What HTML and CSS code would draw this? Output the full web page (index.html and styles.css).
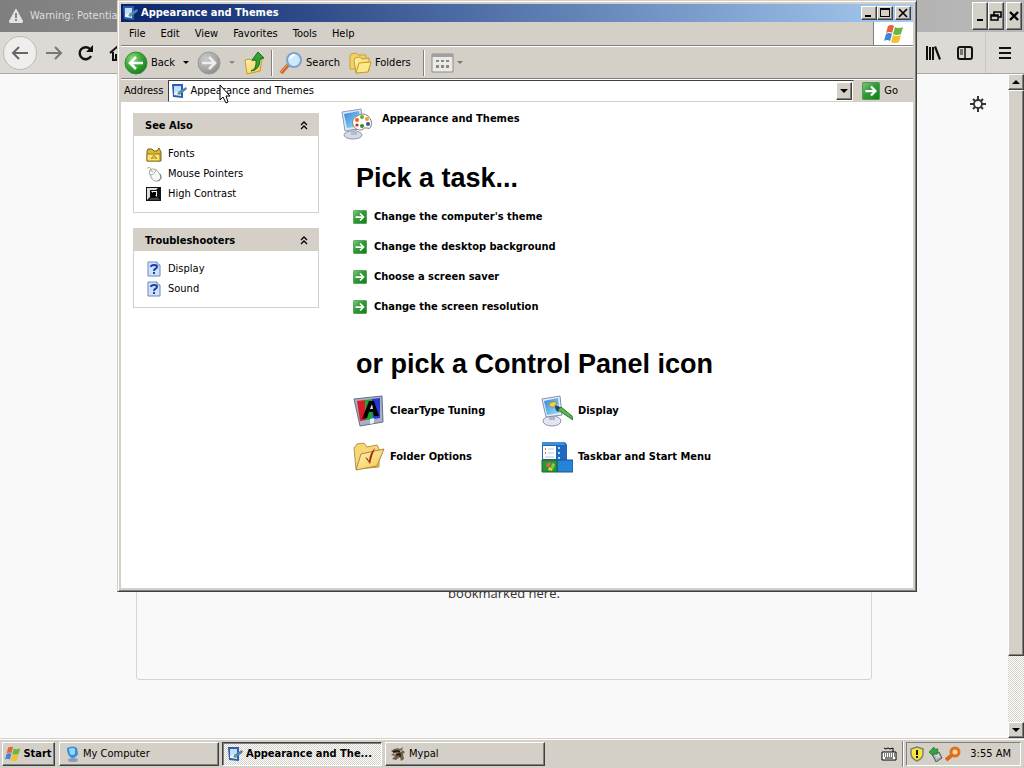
FILE: index.html
```html
<!DOCTYPE html>
<html lang="en">
<head>
    <meta charset="UTF-8">
    <meta name="viewport" content="width=device-width, initial-scale=1.0">
    <title>Appearance and Themes</title>
    <link rel="stylesheet" href="styles.css">
</head>
<body>
    <!-- shared icons -->
    <svg class="defs" aria-hidden="true">
        <defs>
            <linearGradient id="green" x1="0" y1="0" x2="1" y2="1">
                <stop offset="0" stop-color="#8cc98a"/><stop offset=".4" stop-color="#35a03a"/><stop offset="1" stop-color="#0f7a1a"/>
            </linearGradient>
            <radialGradient id="ball" cx=".35" cy=".3" r=".8">
                <stop offset="0" stop-color="#8fdc7c"/><stop offset=".5" stop-color="#3aa935"/><stop offset="1" stop-color="#15731b"/>
            </radialGradient>
            <radialGradient id="grayball" cx=".35" cy=".3" r=".8">
                <stop offset="0" stop-color="#c9c9c9"/><stop offset=".6" stop-color="#a9a8a6"/><stop offset="1" stop-color="#858585"/>
            </radialGradient>
            <linearGradient id="screen" x1="0" y1="0" x2="1" y2="1">
                <stop offset="0" stop-color="#2f86dd"/><stop offset="1" stop-color="#a5e0fb"/>
            </linearGradient>
            <linearGradient id="yellow" x1="0" y1="0" x2="1" y2="1">
                <stop offset="0" stop-color="#fff6b8"/><stop offset="1" stop-color="#f0c648"/>
            </linearGradient>
        </defs>
        <symbol id="i-theme" viewBox="0 0 16 16">
            <path d="M1 1h11v14l-10-1z" fill="#2d5eb0"/>
            <path d="M3 3h7v10l-7-1z" fill="#eaf4fe"/>
            <path d="M3 3h7v4l-7 3z" fill="#c5ddf8"/>
            <path d="M7 9l3-2 5-3 1 2-5 4z" fill="#4f83b5"/>
            <path d="M6 11l2-3 3 1-2 3z" fill="#5d9c8c"/>
        </symbol>
        <symbol id="i-arrow" viewBox="0 0 16 16">
            <rect x=".5" y=".5" width="15" height="15" rx="1" fill="url(#green)" stroke="#4c9c50"/>
            <path d="M3 8h9M8 4l4 4-4 4" fill="none" stroke="#fff" stroke-width="2"/>
        </symbol>
        <symbol id="i-flag" viewBox="0 0 20 18">
            <path d="M4 1q4-2 6 0L8 8Q6 6 2 8z" fill="#e5623a"/>
            <path d="M11 2q3 2 8 0l-2 7q-4 2-8 0z" fill="#6cb53f"/>
            <path d="M2 9q3-2 6 0l-2 7q-3-2-6 0z" fill="#3f84d8"/>
            <path d="M9 10q4 2 8 0l-2 7q-4 2-8 0z" fill="#f5bf2c"/>
        </symbol>
        <symbol id="i-up2" viewBox="0 0 9 9">
            <path d="M1 4l3-3 3 3M1 8l3-3 3 3" fill="none" stroke="#000" stroke-width="1.3"/>
        </symbol>
        <symbol id="i-help" viewBox="0 0 16 16">
            <path d="M2 1h9l3 3v11H2z" fill="#cfe2fb" stroke="#6b87b8"/>
            <path d="M11 1v3h3" fill="#fff" stroke="#6b87b8"/>
            <path d="M5 6q0-2 3-2t3 2q0 1-2 2-1 1-1 2" fill="none" stroke="#1f3fa8" stroke-width="2"/>
            <rect x="7" y="11" width="2" height="2" fill="#1f3fa8"/>
        </symbol>
    </svg>

    <div class="browser">
        <div class="browser-title">
            <svg class="warn" width="16" height="16" viewBox="0 0 16 16"><path d="M8 1q1 0 1 1l6 11q0 2-1 2H2q-1 0-1-2L7 2q0-1 1-1z" fill="#e4e4e4"/><path d="M7 5h2v5H7zM7 11h2v2H7z" fill="#858585"/></svg>
            <span>Warning: Potentia</span>
            <div class="browser-controls">
                <button type="button" aria-label="Minimize"><svg width="12" height="12" viewBox="0 0 12 12"><path d="M3 9h6v2H3z"/></svg></button>
                <button type="button" aria-label="Restore"><svg width="12" height="12" viewBox="0 0 12 12"><path d="M4 5V2h7v5H8M4 2h7" fill="none" stroke="#000" stroke-width="1.6"/><path d="M1 5h7v5H1zM1 6h7" fill="none" stroke="#000" stroke-width="1.5"/></svg></button>
                <button type="button" aria-label="Close" class="gap"><svg width="12" height="12" viewBox="0 0 12 12"><path d="M2 2l8 8M10 2l-8 8" stroke="#000" stroke-width="2.4"/></svg></button>
            </div>
        </div>
        <div class="browser-nav">
            <button type="button" class="round" aria-label="Back"><svg width="20" height="20" viewBox="0 0 20 20"><path d="M18 10H3M9 4l-6 6 6 6" fill="none" stroke="#666" stroke-width="2"/></svg></button>
            <button type="button" aria-label="Forward"><svg width="18" height="18" viewBox="0 0 18 18"><path d="M1 9h15M10 3l6 6-6 6" fill="none" stroke="#777" stroke-width="2"/></svg></button>
            <button type="button" aria-label="Reload"><svg width="18" height="18" viewBox="0 0 18 18"><path d="M14 12a6 6 0 1 1-1-7" fill="none" stroke="#111" stroke-width="2.4"/><path d="M16 1v7H9z" fill="#111"/></svg></button>
            <button type="button" aria-label="Home"><svg width="18" height="18" viewBox="0 0 18 18"><path d="M1 9l8-7 8 7M4 8v8h3v-5h4v5h3V8" fill="none" stroke="#111" stroke-width="2"/></svg></button>
            <div class="nav-right">
                <button type="button" aria-label="Library"><svg width="16" height="16" viewBox="0 0 16 16"><path d="M1 1h2v14H1zM4 2h2v13H4zM7 2h2v13H7zM9 2l2-1 5 13-2 1z" fill="#111"/></svg></button>
                <button type="button" aria-label="Sidebars"><svg width="16" height="16" viewBox="0 0 16 16"><rect x="1" y="2" width="14" height="12" rx="2" fill="none" stroke="#111" stroke-width="2"/><path d="M8 2v12" stroke="#111" stroke-width="1.5"/><path d="M3 5h3M3 7h3M3 9h3" stroke="#111"/></svg></button>
                <button type="button" aria-label="Open menu" class="menu-button"><svg width="14" height="14" viewBox="0 0 14 14"><path d="M1 1h12v2H1zM1 6h12v2H1zM1 11h12v2H1z" fill="#111"/></svg></button>
            </div>
        </div>
        <div class="browser-body">
            <div class="page">
                <svg class="gear" width="16" height="16" viewBox="0 0 16 16"><circle cx="8" cy="8" r="4" fill="none" stroke="#333" stroke-width="1.8"/><path d="M8 0v4M8 12v4M0 8h4M12 8h4M3 3l2 2M11 11l2 2M13 3l-2 2M5 11l-2 2" stroke="#333" stroke-width="2"/></svg>
                <section class="highlights"><p>bookmarked here.</p></section>
            </div>
            <div class="scrollbar">
                <button type="button" aria-label="Scroll up"><svg width="8" height="4" viewBox="0 0 8 4"><path d="M0 4l4-4 4 4z"/></svg></button>
                <div class="thumb"></div>
                <div class="track"></div>
                <button type="button" aria-label="Scroll down"><svg width="8" height="4" viewBox="0 0 8 4"><path d="M0 0h8L4 4z"/></svg></button>
            </div>
        </div>
    </div>

    <div class="window">
        <div class="title-bar">
            <svg width="16" height="16"><use href="#i-theme"/></svg>
            <span>Appearance and Themes</span>
            <div class="controls">
                <button type="button" aria-label="Minimize"><svg width="10" height="10" viewBox="0 0 10 10"><path d="M1 7h6v2H1z"/></svg></button>
                <button type="button" aria-label="Maximize"><svg width="10" height="10" viewBox="0 0 10 10"><path d="M0 0h10v9H0zM1 2v6h8V2z" fill-rule="evenodd"/></svg></button>
                <button type="button" aria-label="Close" class="gap"><svg width="10" height="10" viewBox="0 0 10 10"><path d="M1 1l8 8M9 1L1 9" stroke="#000" stroke-width="1.7"/></svg></button>
            </div>
        </div>

        <div class="menu-bar">
            <nav>
                <a href="#">File</a>
                <a href="#">Edit</a>
                <a href="#">View</a>
                <a href="#">Favorites</a>
                <a href="#">Tools</a>
                <a href="#">Help</a>
            </nav>
            <div class="brand"><svg width="20" height="18"><use href="#i-flag"/></svg></div>
        </div>

        <div class="tool-bar">
            <button type="button" class="tool"><svg width="24" height="24" viewBox="0 0 24 24"><circle cx="12" cy="12" r="11" fill="url(#ball)" stroke="#3c8b3c"/><path d="M19 12H7M12 6l-6 6 6 6" fill="none" stroke="#fff" stroke-width="2.6"/></svg>Back<svg class="drop" width="6" height="3" viewBox="0 0 6 3"><path d="M0 0h6L3 3z"/></svg></button>
            <button type="button" class="tool forward" aria-label="Forward"><svg width="24" height="24" viewBox="0 0 24 24"><circle cx="12" cy="12" r="11" fill="url(#grayball)" stroke="#999"/><path d="M5 12h12M12 6l6 6-6 6" fill="none" stroke="#eee" stroke-width="2.6"/></svg><svg class="drop" width="6" height="3" viewBox="0 0 6 3"><path d="M0 0h6L3 3z" fill="#888"/></svg></button>
            <button type="button" class="tool up" aria-label="Up"><svg width="22" height="24" viewBox="0 0 22 24"><path d="M2 9l5-1 2 2 10-2-2 12-13 3z" fill="url(#yellow)" stroke="#c99b25"/><path d="M8 20q6-2 5-11H9l6-8 6 6-4 1q0 11-9 12z" fill="#30a235" stroke="#167020"/></svg></button>
            <span class="separator"></span>
            <button type="button" class="tool"><svg width="24" height="24" viewBox="0 0 24 24"><path d="M2 22l8-9" stroke="#cc6b32" stroke-width="4"/><path d="M2 21l7-8" stroke="#f1a36c"/><circle cx="15" cy="9" r="7" fill="#cdeafc" stroke="#7fa3cf" stroke-width="2"/><path d="M11 8q1-4 5-4" stroke="#fff" stroke-width="2" fill="none"/></svg>Search</button>
            <button type="button" class="tool folders"><svg width="24" height="24" viewBox="0 0 24 24"><path d="M2 5l1-2 5-1 2 2h8v14H2z" fill="#f2d168" stroke="#c9a136"/><path d="M6 10l1-3 5-1 2 2 7-1v13l-13 2z" fill="url(#yellow)" stroke="#c99b25"/><path d="M8 22l3-10 12-1-3 10z" fill="#fde98a" stroke="#c99b25"/></svg>Folders</button>
            <span class="separator"></span>
            <button type="button" class="tool" aria-label="Views"><svg width="23" height="20" viewBox="0 0 23 20"><path d="M1 1h21v18H1z" fill="#eceae6" stroke="#8c8c8c"/><path d="M1 1h21v3H1z" fill="#a0a0a0"/><path d="M5 7h3v2H5zM10 7h3v2h-3zM15 7h3v2h-3zM5 12h3v3H5zM10 12h3v3h-3zM15 12h3v3h-3z" fill="#898989"/></svg><svg class="drop near" width="6" height="3" viewBox="0 0 6 3"><path d="M0 0h6L3 3z" fill="#777"/></svg></button>
        </div>

        <form class="address-bar">
            <label for="address">Address</label>
            <div class="combo">
                <svg width="16" height="16"><use href="#i-theme"/></svg>
                <input type="text" id="address" value="Appearance and Themes">
                <button type="button" aria-label="Show addresses"><svg width="8" height="4" viewBox="0 0 8 4"><path d="M0 0h8L4 4z"/></svg></button>
            </div>
            <button type="button" class="go"><svg width="18" height="18"><use href="#i-arrow"/></svg>Go</button>
        </form>

        <div class="content">
            <aside>
                <section class="panel">
                    <h2>See Also<svg width="9" height="9"><use href="#i-up2"/></svg></h2>
                    <ul>
                        <li><a href="#"><svg width="16" height="16" viewBox="0 0 16 16"><path d="M1 5l1-2h4l2 2h3l2-3 2 4v9H1z" fill="#dcb736" stroke="#7a6420"/><path d="M1 15V8h13v7z" fill="#fbe56f" stroke="#98791d"/><path d="M5 13l3-4 3 4M6 12h4" fill="none" stroke="#a58a20"/></svg>Fonts</a></li>
                        <li><a href="#"><svg width="16" height="16" viewBox="0 0 16 16"><path d="M1 2q3-2 5 2" fill="none" stroke="#aaa"/><path d="M4 4q5-3 9 3 4 5-1 8-5 1-7-4-3-4-1-7z" fill="#f7f7f5" stroke="#a2a2a2"/><path d="M4 9q5 0 6-6M7 6l-3-2" fill="none" stroke="#aaa"/><path d="M14 8q3 5-2 7" fill="none" stroke="#777"/></svg>Mouse Pointers</a></li>
                        <li><a href="#"><svg width="16" height="16" viewBox="0 0 16 16"><path d="M0 1h15v14H0z" fill="#111"/><path d="M1 2h11l-2 2H4v7l-3 3z" fill="#ddd"/><path d="M5 5h6v6H5z" fill="#fff"/><path d="M5 5l6 6H5z" fill="#000"/><path d="M7 6h3v3H7z" fill="#000"/><path d="M11 11l3 3H3l2-2h6z" fill="#444"/></svg>High Contrast</a></li>
                    </ul>
                </section>
                <section class="panel">
                    <h2>Troubleshooters<svg width="9" height="9"><use href="#i-up2"/></svg></h2>
                    <ul>
                        <li><a href="#"><svg width="16" height="16"><use href="#i-help"/></svg>Display</a></li>
                        <li><a href="#"><svg width="16" height="16"><use href="#i-help"/></svg>Sound</a></li>
                    </ul>
                </section>
            </aside>

            <main>
                <header class="category">
                    <svg width="32" height="32" viewBox="0 0 32 32"><ellipse cx="12" cy="27" rx="9" ry="4" fill="#d5dbe6" stroke="#8d98ad"/><path d="M10 20h6v7h-6z" fill="#b4bccb"/><path d="M1 4l19-3 2 19-18 3z" fill="#dfe6f2" stroke="#8c9bb8"/><path d="M3 6l15-3 2 15-14 2z" fill="url(#screen)"/><path d="M12 17q-2-6 4-9 6-4 11 0 5 5 3 10-1 4-4 2-3-1-5 2-6 1-9-5z" fill="#fffdf6" stroke="#8a8172"/><circle cx="16" cy="12" r="2" fill="#e8632b"/><circle cx="21" cy="9" r="2" fill="#5aaf3c"/><circle cx="26" cy="11" r="2" fill="#ef9b32"/><circle cx="27" cy="16" r="2" fill="#2c56b5"/><circle cx="21" cy="18" r="2" fill="#2d8a46"/><circle cx="16" cy="17" r="1.6" fill="#c23024"/></svg>
                    <span>Appearance and Themes</span>
                </header>

                <h1>Pick a task...</h1>
                <ul class="tasks">
                    <li><a href="#"><svg width="14" height="14"><use href="#i-arrow"/></svg>Change the computer's theme</a></li>
                    <li><a href="#"><svg width="14" height="14"><use href="#i-arrow"/></svg>Change the desktop background</a></li>
                    <li><a href="#"><svg width="14" height="14"><use href="#i-arrow"/></svg>Choose a screen saver</a></li>
                    <li><a href="#"><svg width="14" height="14"><use href="#i-arrow"/></svg>Change the screen resolution</a></li>
                </ul>

                <h1>or pick a Control Panel icon</h1>
                <ul class="icons">
                    <li><a href="#"><svg width="32" height="32" viewBox="0 0 32 32"><path d="M1 4l28-3 1 26-23 4z" fill="#a9afc4" stroke="#666e88"/><path d="M4 6l8-1 1 20-6 1z" fill="#d91d24"/><path d="M12 5l8-1 1 20-8 1z" fill="#1ea33b"/><path d="M19 4l8-1v20l-7 1z" fill="#2439d2"/><path d="M9 24l7-18h5l5 15h-5l-1-4h-4l-2 6z" fill="#000"/><path d="M17 14l2-5 1 5z" fill="#e4e4e4"/><path d="M17 24l4-1v5l-4 1z" fill="#e7f0fb"/></svg>ClearType Tuning</a></li>
                    <li><a href="#"><svg width="32" height="32" viewBox="0 0 32 32"><ellipse cx="11" cy="26" rx="9" ry="5" fill="#e2e4ef" stroke="#8f94ac"/><path d="M8 20h6v5H8z" fill="#aeb6cc"/><path d="M1 4l18-3 2 19-16 2z" fill="#e8edf7" stroke="#8091b0"/><path d="M3 6l14-3 2 15-13 2z" fill="url(#screen)"/><path d="M8 9q4-4 8-1l-3 4q-4 1-5-3z" fill="#efd146" stroke="#9d7d21" stroke-width=".7"/><path d="M14 11q4-1 6 3l-3 3q-3-2-3-6z" fill="#26446a"/><path d="M17 15l3-3 11 9 1 4z" fill="#5bb548" stroke="#267b2b"/></svg>Display</a></li>
                    <li><a href="#"><svg width="32" height="32" viewBox="0 0 32 32"><path d="M1 7l3-4 7-1 3 4 10-2 2 4v18L3 28z" fill="#f6d679" stroke="#b89443"/><path d="M3 29L8 13l23-5-7 17z" fill="url(#yellow)" stroke="#ae8740"/><path d="M12 16q3 1 4 4 1-9 6-13-3 7-5 16z" fill="#a82218"/></svg>Folder Options</a></li>
                    <li><a href="#"><svg width="32" height="32" viewBox="0 0 32 32"><path d="M1 1h22q2 0 3 3v15H1z" fill="#2169bf"/><path d="M1 1h22l1 3H1z" fill="#438ed8"/><path d="M2 5h13v13H2z" fill="#fff"/><path d="M4 7h1v2H4zM4 11h1v2H4z" fill="#e3733e"/><path d="M7 8h6M7 12h6M4 16h9" stroke="#b8c9dd"/><path d="M17 6h2v2h-2zM17 11h2v2h-2zM17 16h2v2h-2z" fill="#a5e1ff"/><path d="M16 19h16v12H16z" fill="#2783d8" stroke="#1c5493"/><path d="M1 19h15v12H1z" fill="#279638" stroke="#1b662b"/><path d="M6 22l4-1-1 4-4 1z" fill="#e9643c"/><path d="M11 22l3 1-1 4-3-1z" fill="#88cc4e"/><path d="M8 26l4 1-1 3-4-1z" fill="#f4c53b"/></svg>Taskbar and Start Menu</a></li>
                </ul>
            </main>
        </div>
    </div>

    <footer class="taskbar">
        <button type="button" class="start"><svg width="16" height="16"><use href="#i-flag"/></svg>Start</button>
        <button type="button" class="task"><svg width="16" height="16" viewBox="0 0 16 16"><ellipse cx="9" cy="14" rx="5" ry="2" fill="#8e9bb7"/><path d="M3 2q6-3 10 0l1 6q-2 4-6 4-5-2-5-10z" fill="#328ee0"/><path d="M5 3q4-2 6 0v5q-3 2-5 0z" fill="#94d9ff"/></svg><span>My Computer</span></button>
        <button type="button" class="task active"><svg width="16" height="16"><use href="#i-theme"/></svg><span>Appearance and The...</span></button>
        <button type="button" class="task"><svg width="16" height="16" viewBox="0 0 16 16"><path d="M1 5q5-4 9-2l3-2-1 3 3 2-2 2 1 5-3 2-1-4-4 3-4-1 3-3-4-1 3-2z" fill="#726047"/><path d="M3 6q4-2 7 0M6 9l4-1v3" stroke="#1c1711" stroke-width="1.5" fill="none"/><path d="M4 8h2M10 5h2" stroke="#eee2c6"/></svg><span>Mypal</span></button>
        <div class="tray-area">
            <svg width="16" height="14" viewBox="0 0 16 14"><path d="M3 1l2 1 2-1 2 1 3-1v4" stroke="#000" fill="none"/><path d="M1 5h14v8H1z" fill="#fff" stroke="#000"/><path d="M3 7h11M3 9h11" stroke="#000" stroke-dasharray="1 1"/><path d="M4 11h8" stroke="#000"/></svg>
            <span class="separator"></span>
            <div class="tray">
                <svg width="16" height="16" viewBox="0 0 16 16"><path d="M8 1l6 2v5q0 4-6 7-6-3-6-7V3z" fill="#f7e736" stroke="#82806f" stroke-width="1.5"/><path d="M7 4h2v5H7zM7 10h2v2H7z" fill="#111"/></svg>
                <svg width="16" height="16" viewBox="0 0 16 16"><path d="M5 8l7-2 3 6-6 4z" fill="#a8acb0" stroke="#55595e"/><path d="M8 10l4-1M9 12l4-2" stroke="#eee"/><path d="M2 6l5-5v2h4l-1 5H6v2z" fill="#35a53b" stroke="#20752b" stroke-width=".7"/></svg>
                <svg width="16" height="16" viewBox="0 0 16 16"><path d="M1 14l6-5" stroke="#d9691c" stroke-width="4"/><circle cx="10" cy="6" r="4" fill="#fbd9b4" stroke="#e1701d" stroke-width="3"/></svg>
                <span class="clock">3:55 AM</span>
            </div>
        </div>
    </footer>

    <svg class="cursor" width="13" height="21" viewBox="0 0 13 21" aria-hidden="true"><path d="M1 1v15l3-3 3 6 2-1-2-6h4z" fill="#fff" stroke="#000"/></svg>
</body>
</html>
```

FILE: styles.css
```css
* {
    box-sizing: border-box;
}

body {
    margin: 0;
    height: 100vh;
    display: flex;
    flex-direction: column;
    position: relative;
    overflow: hidden;
    font-family: 'DejaVu Sans Condensed', 'Noto Sans', sans-serif;
    font-size: 11px;
    line-height: 16px;
    color: #000;
    background: #d4d0c8;
}

button {
    font: inherit;
    color: inherit;
    margin: 0;
    padding: 0;
    border: none;
    background: none;
    display: flex;
    align-items: center;
    justify-content: center;
}

a {
    color: inherit;
    text-decoration: none;
}

ul {
    list-style: none;
    margin: 0;
    padding: 0;
}

svg {
    flex-shrink: 0;
}

.defs {
    position: absolute;
    width: 0;
    height: 0;
}

/* browser in the background */
.browser {
    flex: 1;
    min-height: 0;
    display: flex;
    flex-direction: column;
}

.browser-title {
    height: 32px;
    display: flex;
    align-items: center;
    gap: 6px;
    padding: 0 2px 0 8px;
    color: #dedede;
    background: linear-gradient(90deg, #7f7f7f, #b9b9b9);
    white-space: nowrap;
}

.browser-controls,
.controls {
    display: flex;
    margin-left: auto;
}

.browser-controls button,
.controls button,
.scrollbar button,
.combo button,
.thumb {
    background: #d4d0c8;
    border: 1px solid;
    border-color: #fff #404040 #404040 #fff;
    box-shadow: inset -1px -1px #808080;
}

.browser-controls button {
    width: 16px;
    height: 28px;
}

.gap {
    margin-left: 2px;
}

.browser-nav {
    height: 42px;
    display: flex;
    align-items: center;
    gap: 14px;
    padding: 0 12px 0 3px;
    background: #dddad5;
    border-bottom: 1px solid #a9a7a3;
}

.browser-nav .round {
    width: 34px;
    height: 34px;
    margin-right: -6px;
    border: 1px solid #bdbab6;
    border-radius: 50%;
    background: #efeeec;
}

.nav-right {
    display: flex;
    align-items: center;
    gap: 16px;
    margin-left: auto;
}

.nav-right .menu-button {
    height: 40px;
    margin-left: -4px;
    padding-left: 12px;
    border-left: 1px solid #cbc8c3;
}

.browser-body {
    flex: 1;
    min-height: 0;
    display: flex;
}

.page {
    flex: 1;
    display: flex;
    flex-direction: column;
    padding: 22px 22px 58px;
    background: #f9f9f9;
}

.gear {
    align-self: flex-end;
}

.highlights {
    flex: 1;
    display: flex;
    align-items: flex-end;
    justify-content: center;
    width: 100%;
    max-width: 736px;
    margin: 0 auto;
    padding-bottom: 76px;
    border: 1px solid #d4d4d4;
    border-radius: 3px;
}

.highlights p {
    margin: 0;
    font-family: 'Open Sans', sans-serif;
    font-size: 13px;
    line-height: 20px;
    color: #333;
}

.scrollbar {
    width: 16px;
    display: flex;
    flex-direction: column;
}

.scrollbar button {
    height: 16px;
}

.thumb {
    flex: 17;
}

.track {
    flex: 2;
    background: repeating-conic-gradient(#fff 0 25%, #d4d0c8 0 50%) 0 0 / 2px 2px;
}

/* explorer window */
.window {
    position: absolute;
    top: 0;
    bottom: 176px;
    left: 117px;
    right: 107px;
    display: flex;
    flex-direction: column;
    padding: 3px;
    background: #d4d0c8;
    border: 1px solid;
    border-color: #d4d0c8 #404040 #404040 #d4d0c8;
    box-shadow: inset 1px 1px #fff, inset -1px -1px #808080;
}

.title-bar {
    height: 18px;
    display: flex;
    align-items: center;
    gap: 3px;
    padding: 0 2px 0 1px;
    font-weight: bold;
    color: #fff;
    background: linear-gradient(90deg, #0a246a, #a6caf0);
}

.controls button {
    width: 16px;
    height: 14px;
}

.menu-bar {
    height: 24px;
    display: flex;
    border-bottom: 1px solid #808080;
}

.menu-bar nav {
    flex: 1;
    display: flex;
    align-items: center;
    gap: 15px;
    padding-left: 8px;
}

.brand {
    width: 40px;
    display: flex;
    align-items: center;
    justify-content: center;
    background: #fff;
    border-left: 1px solid #808080;
}

.tool-bar {
    height: 33px;
    display: flex;
    align-items: center;
    padding-left: 3px;
    border-top: 1px solid #fff;
    border-bottom: 1px solid #808080;
}

.tool {
    gap: 3px;
}

.drop {
    margin-left: 5px;
}

.drop.near {
    margin-left: 0;
}

.forward,
.up,
.folders {
    margin-left: 8px;
}

.separator {
    width: 2px;
    height: 26px;
    margin: 0 6px;
    border-left: 1px solid #808080;
    border-right: 1px solid #fff;
}

.folders + .separator {
    margin-left: 12px;
}

.address-bar {
    display: flex;
    align-items: center;
    gap: 5px;
    height: 23px;
    padding-left: 3px;
    border-top: 1px solid #fff;
}

.combo {
    flex: 1;
    display: flex;
    align-items: center;
    gap: 3px;
    height: 22px;
    padding: 1px 1px 1px 2px;
    background: #fff;
    border: 1px solid;
    border-color: #404040 #d4d0c8 #d4d0c8 #404040;
}

.combo input {
    flex: 1;
    min-width: 0;
    padding: 0;
    border: none;
    outline: none;
    font: inherit;
}

.combo button {
    width: 16px;
    height: 18px;
}

.go {
    gap: 4px;
    padding: 0 15px 0 3px;
}

.content {
    flex: 1;
    min-height: 0;
    display: flex;
    gap: 22px;
    padding: 11px 12px;
    background: #fff;
}

aside {
    width: 186px;
    display: flex;
    flex-direction: column;
    gap: 15px;
}

.panel {
    border: 1px solid #d4d0c8;
}

.panel h2 {
    display: flex;
    align-items: center;
    justify-content: space-between;
    height: 22px;
    margin: 0;
    padding: 1px 9px 0 11px;
    font-size: 11px;
    background: #d4d0c8;
}

.panel ul {
    padding: 8px 12px;
}

.panel a {
    display: flex;
    align-items: center;
    gap: 6px;
    height: 20px;
}

main {
    flex: 1;
    font-weight: bold;
}

.category {
    display: flex;
    gap: 9px;
    margin-top: -5px;
}

.category span {
    padding-top: 3px;
}

h1 {
    margin: 22px 0 15px 15px;
    font-family: 'Liberation Sans', sans-serif;
    font-size: 27px;
    line-height: 32px;
}

.tasks,
.icons {
    margin-left: 12px;
}

.tasks a {
    display: flex;
    align-items: center;
    gap: 7px;
}

.tasks {
    display: flex;
    flex-direction: column;
    gap: 14px;
    margin-bottom: 33px;
}

.icons {
    display: grid;
    grid-template-columns: 188px 1fr;
    gap: 14px 0;
}

.icons a {
    display: flex;
    align-items: center;
    gap: 5px;
}

/* taskbar */
.taskbar {
    height: 30px;
    display: flex;
    align-items: center;
    gap: 3px;
    padding: 0 3px 0 2px;
    border-top: 1px solid #d4d0c8;
    box-shadow: inset 0 1px #fff;
}

.start,
.task {
    height: 24px;
    border: 1px solid;
    border-color: #fff #404040 #404040 #fff;
    box-shadow: inset -1px -1px #808080;
}

.start {
    width: 53px;
    gap: 2px;
    margin-right: 1px;
    font-weight: bold;
}

.task {
    flex: 0 1 160px;
    min-width: 0;
    gap: 3px;
    padding: 0 4px;
    justify-content: flex-start;
    white-space: nowrap;
}

.task.active {
    font-weight: bold;
    border-color: #404040 #fff #fff #404040;
    box-shadow: inset 1px 1px #808080;
    background: repeating-conic-gradient(#fff 0 25%, #d4d0c8 0 50%) 0 0 / 2px 2px;
}

.tray-area {
    display: flex;
    align-items: center;
    margin-left: auto;
}

.tray-area .separator {
    margin: 0 2px 0 5px;
}

.tray {
    display: flex;
    align-items: center;
    gap: 2px;
    height: 24px;
    padding: 0 9px 0 2px;
    border: 1px solid;
    border-color: #808080 #fff #fff #808080;
}

.clock {
    margin-left: 7px;
}

.cursor {
    position: absolute;
    left: 219px;
    top: 84px;
}
```
